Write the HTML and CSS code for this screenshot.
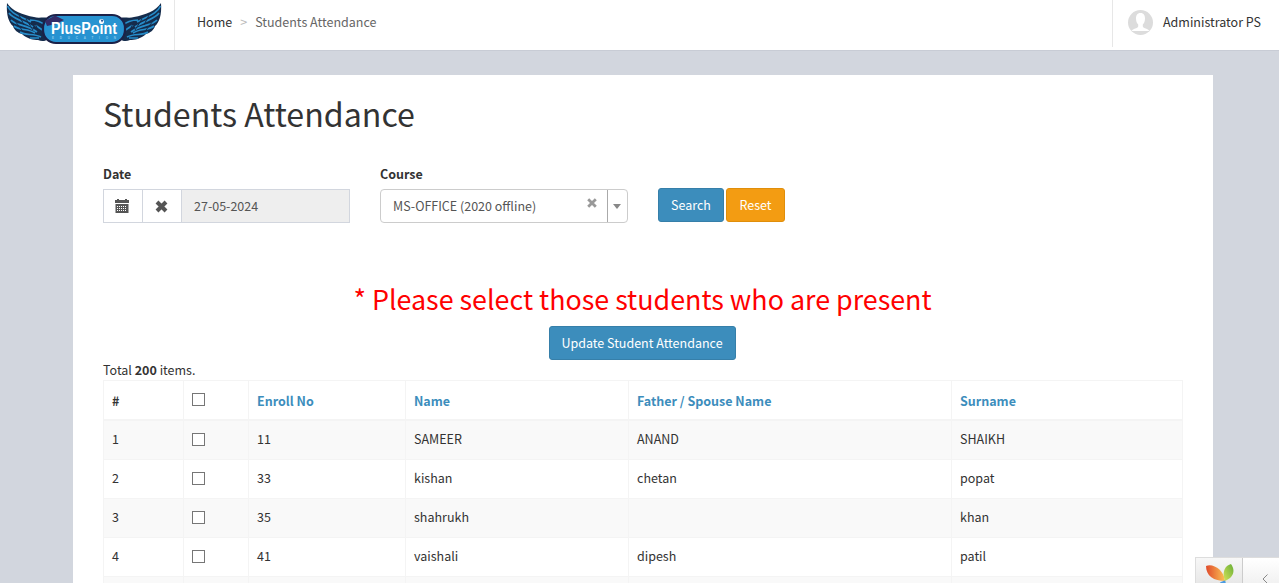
FILE: index.html
```html
<!DOCTYPE html>
<html lang="en">
<head>
<meta charset="utf-8">
<title>Students Attendance</title>
<link rel="stylesheet" href="styles.css">
</head>
<body>
<header class="topbar">
  <a class="logo" href="#">
    <svg width="160" height="46" viewBox="0 0 160 46">
      <defs>
        <g id="wing">
          <path d="M1 1C0 13 3 21 7 24C8 28 12 31 16 32C21 37 28 38 32 38C36 40 40 39 42 37L46 27L43 17C40 14 33 17 28 15C17 13 6 9 1 1Z" fill="#152c4c"/>
          <path d="M1.500 4C5 12 14 14 25 20M3 11C7 17 16 18 27 25M5 18C10 24 20 22 31 30M8 24C14 29 21 26 29 31M14 30C20 34 27 31 35 35M24 18C30 18 35 19 40 24M29 23L38 29M24 36L33 36" fill="none" stroke="#268cc9" stroke-width="1.700"/>
          <path d="M13 13L18 23M20 17L27 28M28 19L34 33M9 19L16 28" fill="none" stroke="#152c4c" stroke-width="1"/>
        </g>
      </defs>
      <use href="#wing"/>
      <use href="#wing" transform="translate(156 0) scale(-1 1)"/>
      <rect x="37" y="13" width="82" height="28" rx="13" fill="#2793d1" stroke="#1b2148" stroke-width="2.200"/>
      <path d="M39 19L49 13.500L58 18L50 22L41 24Z" fill="#342b66"/>
      <text class="logo-name" x="45" y="31.500" textLength="66" lengthAdjust="spacingAndGlyphs">PlusPoint</text>
      <text class="logo-sub" x="46" y="37" textLength="64">EDUCATION</text>
      <circle cx="95.500" cy="19.500" r="2.500" fill="#fff"/>
      <path d="M94.500 17.500L97.500 18L96 20.500Z" fill="#24559b"/>
    </svg>
  </a>
  <nav class="crumbs"><a class="home" href="#">Home</a><span class="sep">&gt;</span><span>Students Attendance</span></nav>
  <a class="user" href="#">
    <svg width="25" height="25" viewBox="0 0 25 25">
      <circle cx="12.500" cy="12.500" r="12.500" fill="#dcdcdc"/>
      <path d="M12.500 3C9 3 8 5.500 8 8.500C8 11.500 9 13.500 10.200 14.500V16.500C9.500 18.500 5 18.500 3.500 21H21.500C20 18.500 15.500 18.500 14.800 16.500V14.500C16 13.500 17 11.500 17 8.500C17 5.500 16 3 12.500 3Z" fill="#fff"/>
    </svg>
    <span>Administrator PS</span>
  </a>
</header>
<main class="panel">
  <h1 class="title">Students Attendance</h1>
  <form class="filters">
    <div class="field date">
      <label class="label">Date</label>
      <div class="group">
        <span class="addon"><svg width="14" height="14" viewBox="0 0 14 14"><path fill="#555" d="M0 1H2V0H4V1H10V0H12V1H14V4H0Z"/><path fill="#555" fill-rule="evenodd" d="M0.500 5H13.500V14H0.500ZM2 7V8H3V7ZM4 7V8H5V7ZM6 7V8H7V7ZM8 7V8H9V7ZM10 7V8H11V7ZM2 9V10H3V9ZM4 9V10H5V9ZM6 9V10H7V9ZM8 9V10H9V9ZM10 9V10H11V9ZM2 11V12H3V11ZM4 11V12H5V11ZM6 11V12H7V11ZM8 11V12H9V11ZM10 11V12H11V11Z"/></svg></span>
        <span class="addon"><svg width="13" height="13" viewBox="0 0 13 13"><path d="M2 2L11 11M11 2L2 11" stroke="#555" stroke-width="4"/></svg></span>
        <span class="value">27-05-2024</span>
      </div>
    </div>
    <div class="field course">
      <label class="label">Course</label>
      <div class="select">
        <span class="chosen">MS-OFFICE (2020 offline)</span>
        <svg class="clear" width="10" height="10" viewBox="0 0 10 10"><path d="M1.200 1.200L8.800 8.800M8.800 1.200L1.200 8.800" stroke="#999" stroke-width="2.800"/></svg>
        <span class="arrow"></span>
      </div>
    </div>
    <div class="actions"><button class="btn" type="button">Search</button><button class="btn warn" type="button">Reset</button></div>
  </form>
  <div class="notice">* Please select those students who are present</div>
  <div class="update"><button class="btn wide" type="button">Update Student Attendance</button></div>
  <div class="summary">Total <b>200</b> items.</div>
  <table class="grid">
    <colgroup><col class="c1"><col class="c2"><col class="c3"><col class="c4"><col class="c5"><col class="c6"></colgroup>
    <thead><tr><th class="num">#</th><th><i class="box"></i></th><th>Enroll No</th><th>Name</th><th>Father / Spouse Name</th><th>Surname</th></tr></thead>
    <tbody>
      <tr class="first"><td>1</td><td><i class="box"></i></td><td>11</td><td>SAMEER</td><td>ANAND</td><td>SHAIKH</td></tr>
      <tr><td>2</td><td><i class="box"></i></td><td>33</td><td>kishan</td><td>chetan</td><td>popat</td></tr>
      <tr><td>3</td><td><i class="box"></i></td><td>35</td><td>shahrukh</td><td></td><td>khan</td></tr>
      <tr><td>4</td><td><i class="box"></i></td><td>41</td><td>vaishali</td><td>dipesh</td><td>patil</td></tr>
      <tr class="last"><td></td><td></td><td></td><td></td><td></td><td></td></tr>
    </tbody>
  </table>
</main>
<aside class="debug">
  <span class="yii"><svg width="30" height="19" viewBox="0 0 30 19">
    <defs>
      <linearGradient id="o"><stop offset="0" stop-color="#e04a2b"/><stop offset="1" stop-color="#fbc254"/></linearGradient>
      <linearGradient id="g" x1="1" y1="0" x2="0" y2="1"><stop offset="0" stop-color="#67ae35"/><stop offset="1" stop-color="#d5e35a"/></linearGradient>
    </defs>
    <path d="M1 2C8 -1 19 6 20 17C9 17 1 12 1 2Z" fill="url(#o)"/>
    <path d="M26 0C31 7 28 14 20 17C17 9 19 2 26 0Z" fill="url(#g)"/>
    <path d="M14 20C15 18 18 17 20 16.500C21 18 21 20 20 22Z" fill="#4b9be0"/>
  </svg></span>
  <span class="toggle"><svg width="6" height="9" viewBox="0 0 6 9"><path d="M5.500 0.500L1 5L5.500 9.500" fill="none" stroke="#888"/></svg></span>
</aside>
</body>
</html>
```
FILE: styles.css
```css
* { box-sizing: border-box; }
body {
  margin: 0;
  height: 583px;
  overflow: hidden;
  background: #d2d6de;
  color: #333;
  font: 12.5px/20px "Noto Sans CJK SC", "Noto Sans", sans-serif;
}
a { color: inherit; text-decoration: none; }
svg { display: block; flex: none; }
.topbar { display: flex; height: 51px; background: #fff; border-bottom: 1px solid #c8ccd5; }
.logo { width: 175px; padding: 2px 0 0 6px; border-right: 1px solid #e7e7e7; }
.logo-name { font: bold 16px "Liberation Sans", sans-serif; fill: #fff; }
.logo-sub { font: bold 3px "Liberation Sans", sans-serif; fill: #8cc9ec; }
.crumbs { display: flex; gap: 8px; padding: 12px 0 0 22px; color: #666; }
.home { color: #333; }
.sep { color: #bbb; }
.user { display: flex; gap: 10px; width: 167px; height: 47px; margin-left: auto; padding: 10px 0 0 15px; border-left: 1px solid #e7e7e7; }
.user span { padding-top: 2px; white-space: nowrap; }
.panel { width: 1140px; height: 508px; overflow: hidden; margin: 24px 0 0 73px; padding: 14px 30px 0; background: #fff; }
.title { margin: 0; font-size: 32.15px; line-height: 48px; font-weight: 400; }
.filters { display: flex; height: 59px; margin-top: 27px; }
.label { display: block; height: 25px; font-weight: 700; }
.date { width: 247px; margin-right: 30px; }
.group { display: flex; height: 34px; border: 1px solid #d2d6de; }
.addon { display: flex; align-items: center; justify-content: center; width: 39px; padding-right: 2px; border-right: 1px solid #d2d6de; }
.value { flex: 1; padding: 6px 12px; background: #eee; color: #555; }
.course { width: 248px; margin-right: 30px; }
.select { display: flex; height: 34px; border: 1px solid #ccc; border-radius: 4px; color: #555; }
.chosen { flex: 1; padding: 6px 0 0 12px; }
.clear { margin: 8px 10px 0 0; }
.arrow { display: flex; width: 20px; border-left: 1px solid #aaa; }
.arrow::before { content: ""; margin: 14px 0 0 5px; width: 0; height: 0; border: 4px solid transparent; border-top: 5px solid #888; border-bottom: 0; }
.actions { display: flex; gap: 2px; padding-top: 24px; }
.btn { height: 34px; width: 66px; padding: 0; border: 1px solid #367fa9; border-radius: 3px; background: #3c8dbc; color: #fff; font: inherit; }
.warn { width: 59px; background: #f39c12; border-color: #e08e0b; }
.wide { width: 187px; }
.notice { margin-top: 56px; height: 47px; padding-right: 1px; color: #f00; font-size: 26.85px; line-height: 39px; text-align: center; }
.update { display: flex; justify-content: center; padding-right: 2px; }
.summary { height: 20px; }
.grid { width: 1080px; border-collapse: collapse; table-layout: fixed; }
.c1 { width: 80px; } .c2 { width: 65px; } .c3 { width: 157px; } .c4 { width: 223px; } .c5 { width: 323px; } .c6 { width: 231px; }
.grid th, .grid td { height: 39px; padding: 0 8px 2px; border: 1px solid #f4f4f4; text-align: left; vertical-align: middle; }
.grid th { height: 39px; border-bottom-width: 2px; color: #3c8dbc; padding-top: 3px; padding-bottom: 0; }
.grid .num { color: #333; }
.grid tbody tr:nth-child(odd) { background: #f9f9f9; }
.grid .first td { height: 40px; padding-bottom: 1px; }
.grid .last td { height: 7px; border-bottom: 0; }
.box { display: block; width: 13px; height: 13px; border: 1px solid #767676; background: #fff; }
th .box { margin-top: -4px; }
.debug { position: fixed; left: 1195px; top: 557px; display: flex; width: 84px; height: 26px; overflow: hidden; border: 1px solid #ddd; border-width: 1px 0 0 1px; background: linear-gradient(#f7f7f7, #e8e8e8); }
.yii { width: 47px; padding: 6px 0 0 9px; border-right: 1px solid #ccc; }
.toggle { flex: 1; padding: 16px 0 0 19px; background: linear-gradient(#fff, #f2f2f2); }
```
